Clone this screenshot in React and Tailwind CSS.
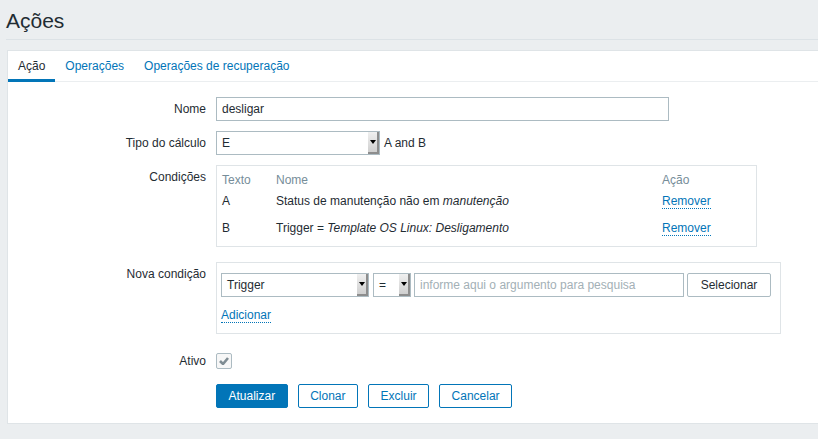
function SelectBox({ value, width }) {
  return (
    <div className={`flex h-[24px] items-stretch border border-[#acbbc2] bg-white ${width}`}>
      <span className="flex-1 pl-[5px] leading-[22px] text-[#1f2c33]">{value}</span>
      <span className="flex w-[11px] items-center justify-center border-r-2 border-b-2 border-[#8d8d8d] bg-gradient-to-b from-[#f0f0f0] to-[#cfcfcf]">
        <span className="h-0 w-0 border-x-[3px] border-t-[4px] border-x-transparent border-t-black" />
      </span>
    </div>
  );
}

function Row({ label, children, className = "" }) {
  return (
    <div className={`flex ${className}`}>
      <div className="w-[208px] shrink-0 pr-[10px] pt-[5px] text-right leading-[14px]">{label}</div>
      {children}
    </div>
  );
}

function LinkDotted({ children }) {
  return (
    <span className="border-b border-dotted border-[#0275b8] leading-[14px] text-[#0275b8]">{children}</span>
  );
}

export default function App() {
  const conditions = [
    {
      id: "A",
      name: (
        <>
          Status de manutenção não em <i>manutenção</i>
        </>
      ),
    },
    {
      id: "B",
      name: (
        <>
          Trigger = <i>Template OS Linux: Desligamento</i>
        </>
      ),
    },
  ];

  return (
    <div className="min-h-screen overflow-hidden bg-[#ebeef0] font-['Liberation_Sans',Arial,sans-serif] text-[12px] text-[#1f2c33]">
      <div className="ml-[6px] h-[40px] border-b border-[#dce2e6]">
        <h1 className="pt-[9px] text-[21px] leading-[24px] text-[#1f2c33]">Ações</h1>
      </div>

      <div className="ml-[7px] mt-[10px] border border-r-0 border-[#dfe4e7] bg-white">
        <div className="flex h-[31px] border-b border-[#ebeef0]">
          <div className="-mb-px border-b-[3px] border-[#0275b8] px-[10px] pt-[8px] leading-[14px]">Ação</div>
          <div className="px-[10px] pt-[8px] leading-[14px] text-[#0275b8]">Operações</div>
          <div className="px-[10px] pt-[8px] leading-[14px] text-[#0275b8]">Operações de recuperação</div>
        </div>

        <div className="pt-[15px] pb-[15px]">
          <Row label="Nome">
            <div className="flex h-[24px] w-[453px] items-center border border-[#acbbc2] pl-[5px]">desligar</div>
          </Row>

          <Row label="Tipo do cálculo" className="mt-[10px]">
            <SelectBox value="E" width="w-[164px]" />
            <span className="ml-[4px] pt-[5px] leading-[14px]">A and B</span>
          </Row>

          <Row label="Condições" className="mt-[10px]">
            <div className="w-[541px] border border-[#dfe4e7] pl-[5px] pt-[7px] pb-[10px]">
              <div className="flex leading-[14px] text-[#768d99]">
                <span className="w-[54px]">Texto</span>
                <span className="w-[386px]">Nome</span>
                <span>Ação</span>
              </div>
              {conditions.map((c, i) => (
                <div key={c.id} className={`flex h-[15px] leading-[14px] ${i === 0 ? "mt-[7px]" : "mt-[12px]"}`}>
                  <span className="w-[54px]">{c.id}</span>
                  <span className="w-[386px]">{c.name}</span>
                  <LinkDotted>Remover</LinkDotted>
                </div>
              ))}
            </div>
          </Row>

          <Row label="Nova condição" className="mt-[15px]">
            <div className="w-[565px] border border-[#dfe4e7] pl-[4px] pt-[10px] pb-[10px]">
              <div className="flex">
                <SelectBox value="Trigger" width="w-[148px]" />
                <div className="ml-[4px]">
                  <SelectBox value="=" width="w-[38px]" />
                </div>
                <div className="ml-[3px] flex h-[24px] w-[270px] items-center border border-[#acbbc2] pl-[5px] text-[#a3b0b6]">
                  informe aqui o argumento para pesquisa
                </div>
                <button className="ml-[3px] h-[24px] w-[84px] rounded-[2px] border border-[#acbbc2] bg-white text-[12px] text-[#1f2c33]">
                  Selecionar
                </button>
              </div>
              <div className="mt-[11px] h-[15px] leading-[14px]">
                <LinkDotted>Adicionar</LinkDotted>
              </div>
            </div>
          </Row>

          <div className="mt-[19px] flex items-center">
            <div className="w-[208px] shrink-0 pr-[10px] text-right leading-[14px]">Ativo</div>
            <span className="flex h-[16px] w-[16px] items-center justify-center rounded-[2px] border border-[#acbbc2] bg-[#f7f7f7]">
              <svg width="10" height="8" viewBox="0 0 10 8">
                <path d="M1 4 L4 7 L9 1" fill="none" stroke="#7f8c93" strokeWidth="2.6" />
              </svg>
            </span>
          </div>

          <div className="mt-[15px] flex gap-[10px] pl-[208px]">
            <button className="h-[24px] rounded-[2px] border border-[#0275b8] bg-[#0275b8] px-[11.5px] text-[12px] text-white">Atualizar</button>
            <button className="h-[24px] rounded-[2px] border border-[#0275b8] bg-white px-[11.5px] text-[12px] text-[#0275b8]">Clonar</button>
            <button className="h-[24px] rounded-[2px] border border-[#0275b8] bg-white px-[11.5px] text-[12px] text-[#0275b8]">Excluir</button>
            <button className="h-[24px] rounded-[2px] border border-[#0275b8] bg-white px-[11.5px] text-[12px] text-[#0275b8]">Cancelar</button>
          </div>
        </div>
      </div>
    </div>
  );
}
